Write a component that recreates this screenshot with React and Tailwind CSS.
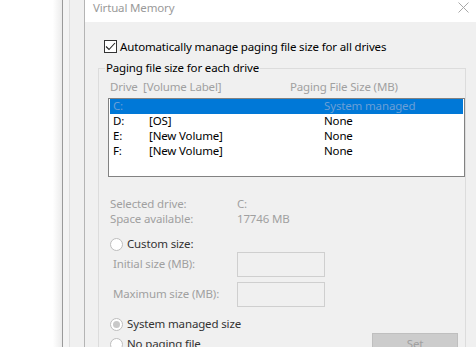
import React from 'react';

const drives = [
  { letter: 'C:', label: '', size: 'System managed', selected: true },
  { letter: 'D:', label: '[OS]', size: 'None' },
  { letter: 'E:', label: '[New Volume]', size: 'None' },
  { letter: 'F:', label: '[New Volume]', size: 'None' },
];

const Radio = ({ checked, disabled }) => (
  <span className="w-[13px] h-[13px] rounded-full border border-[#bdbdbd] bg-white flex items-center justify-center shrink-0">
    {checked && <span className={`w-[7px] h-[7px] rounded-full ${disabled ? 'bg-[#c8c8c8]' : 'bg-[#333]'}`} />}
  </span>
);

export default function App() {
  return (
    <div className="w-[476px] h-[347px] overflow-hidden flex bg-white text-[11.5px] tracking-[-0.15px] leading-none" style={{ fontFamily: '"Noto Sans", "Open Sans", sans-serif' }}>
      {/* background window edge */}
      <div className="w-[62px] h-full bg-gradient-to-r from-white from-[85%] to-[#ececec]" />
      <div className="w-px h-full bg-[#9a9a9a]" />
      <div className="w-[6px] h-full bg-[#f4f4f4]" />
      <div className="w-px h-full bg-[#dedede]" />
      <div className="w-[14px] h-full bg-[#f0f0f0]" />
      <div className="w-px h-full bg-[#b4b4b4]" />

      {/* dialog */}
      <div className="flex-1 flex flex-col min-w-0">
        <div className="h-[22px] bg-white flex items-center justify-between shrink-0">
          <span className="pl-[8px] text-[#9a9a9a] -mt-[7px]">Virtual Memory</span>
          <svg width="11" height="11" viewBox="0 0 11 11" className="mr-[7px] -mt-[7px]">
            <path d="M0.5 0.5 L10.5 10.5 M10.5 0.5 L0.5 10.5" stroke="#a8a8a8" strokeWidth="1" />
          </svg>
        </div>

        <div className="flex-1 bg-[#f0f0f0] pl-[19px] pr-[10px] pt-[18px]">
          <label className="flex items-center gap-[3px] h-[13px]">
            <span className="w-[13px] h-[13px] border border-[#333] bg-white flex items-center justify-center shrink-0">
              <svg width="11" height="9" viewBox="0 0 11 9">
                <path d="M1 4.5 L4 7.5 L10 1" stroke="#222" strokeWidth="1.1" fill="none" />
              </svg>
            </span>
            <span className="text-black">Automatically manage paging file size for all drives</span>
          </label>

          {/* group box */}
          <div className="relative mt-[15px] -ml-[6px] border-l border-r border-t border-[#dcdcdc] h-[400px]">
            <span className="absolute -top-[7px] left-[6px] bg-[#f0f0f0] px-[1px] text-black">Paging file size for each drive</span>

            <div className="flex pt-[12px] pl-[11px] text-[#a0a0a0]">
              <span className="w-[33px]">Drive</span>
              <span className="w-[147px]">[Volume Label]</span>
              <span>Paging File Size (MB)</span>
            </div>

            <div className="mt-[5px] ml-[9px] h-[79px] border border-[#828282] bg-white px-px">
              {drives.map((d) => (
                <div key={d.letter} className={`h-[15px] flex items-center pl-[3px] ${d.selected ? 'bg-[#0078d7] text-[#6a9fd6]' : 'text-black'}`}>
                  <span className="w-[36px]">{d.letter}</span>
                  <span className="w-[175px]">{d.label}</span>
                  <span>{d.size}</span>
                </div>
              ))}
            </div>

            <div className="mt-[21px] ml-[11px] flex flex-col gap-[3px] text-[#a0a0a0]">
              <div className="flex h-[12px] items-center"><span className="w-[127px]">Selected drive:</span><span>C:</span></div>
              <div className="flex h-[12px] items-center"><span className="w-[127px]">Space available:</span><span>17746 MB</span></div>
            </div>

            <label className="mt-[13px] ml-[11px] flex items-center gap-[4px] text-[#333]">
              <Radio />
              <span>Custom size:</span>
            </label>

            <div className="mt-px ml-[14px] flex items-center h-[25px] text-[#a0a0a0]">
              <span className="w-[124px]">Initial size (MB):</span>
              <span className="w-[88px] h-[25px] border border-[#cfcfcf] bg-[#f0f0f0]" />
            </div>
            <div className="mt-[5px] ml-[14px] flex items-center h-[25px] text-[#a0a0a0]">
              <span className="w-[124px]">Maximum size (MB):</span>
              <span className="w-[88px] h-[25px] border border-[#cfcfcf] bg-[#f0f0f0]" />
            </div>

            <div className="mt-[11px] ml-[11px] flex">
              <div className="flex flex-col gap-[7px]">
                <label className="flex items-center gap-[4px] text-[#333]">
                  <Radio checked disabled />
                  <span>System managed size</span>
                </label>
                <label className="flex items-center gap-[4px] text-[#333]">
                  <Radio />
                  <span>No paging file</span>
                </label>
              </div>
              <button className="ml-auto mr-[7px] mt-[15px] w-[86px] h-[23px] bg-[#cccccc] border border-[#bfbfbf] text-[#a0a0a0] flex justify-center pt-[4px]">Set</button>
            </div>
          </div>
        </div>
      </div>
    </div>
  );
}
